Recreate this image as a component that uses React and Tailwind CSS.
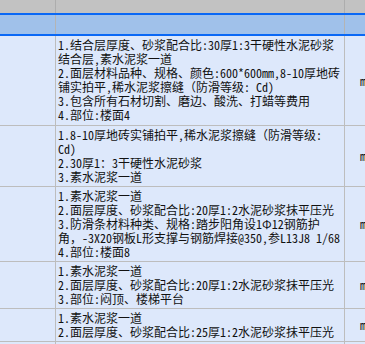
import React from "react";

const rows = [
  {
    h: "h-[89px]",
    lines: [
      "1.结合层厚度、砂浆配合比:30厚1:3干硬性水泥砂浆",
      "结合层,素水泥浆一道",
      "2.面层材料品种、规格、颜色:600*600mm,8-10厚地砖",
      "铺实拍平,稀水泥浆擦缝（防滑等级: Cd)",
      "3.包含所有石材切割、磨边、酸洗、打蜡等费用",
      "4.部位:楼面4",
    ],
  },
  {
    h: "h-[60px]",
    lines: [
      "1.8-10厚地砖实铺拍平,稀水泥浆擦缝（防滑等级:",
      "Cd)",
      "2.30厚1：3干硬性水泥砂浆",
      "3.素水泥浆一道",
    ],
  },
  {
    h: "h-[74px]",
    lines: [
      "1.素水泥浆一道",
      "2.面层厚度、砂浆配合比:20厚1:2水泥砂浆抹平压光",
      "3.防滑条材料种类、规格:踏步阳角设1Φ12钢筋护",
      "角，-3X20钢板L形支撑与钢筋焊接@350,参L13J8 1/68",
      "4.部位:楼面8",
    ],
  },
  {
    h: "h-[46px]",
    lines: [
      "1.素水泥浆一道",
      "2.面层厚度、砂浆配合比:20厚1:2水泥砂浆抹平压光",
      "3.部位:闷顶、楼梯平台",
    ],
  },
  {
    h: "h-[32px]",
    lines: [
      "1.素水泥浆一道",
      "2.面层厚度、砂浆配合比:25厚1:2水泥砂浆抹平压光",
    ],
  },
  {
    h: "h-[20px]",
    lines: [],
  },
];

export default function App() {
  return (
    <div
      className="w-[365px] h-[344px] overflow-hidden bg-[#dde8fb] text-[12px] leading-[14px] text-[#111]"
      style={{ fontFamily: '"Noto Sans Mono CJK SC", "Noto Sans CJK SC", monospace' }}
    >
      {/* gray header */}
      <div className="flex h-[13px] bg-[#c2c2c2]">
        <div className="w-[56px] border-r border-[#adadad]" />
        <div className="w-[289px] border-r border-[#adadad]" />
        <div className="flex-1" />
      </div>
      {/* selected row */}
      <div className="flex h-[23px] bg-[#a0c1ea] border-y-2 border-[#0a68f5]">
        <div className="w-[56px] border-r border-[#b4b4b4]" />
        <div className="w-[289px] border-r border-[#b4b4b4]" />
        <div className="flex-1" />
      </div>
      {rows.map((r, i) => (
        <div key={i} className={`flex ${r.h} border-b border-[#bdbdbd] box-content`}>
          <div className="w-[56px] shrink-0 border-r border-[#bdbdbd]" />
          <div className="w-[289px] shrink-0 border-r border-[#bdbdbd] pl-[2px] pt-[2px] whitespace-nowrap overflow-hidden">
            {r.lines.map((l, j) => (
              <div key={j}>{l}</div>
            ))}
          </div>
          <div className="flex-1 flex items-center pl-[15px] whitespace-nowrap overflow-hidden">
            {r.lines.length > 0 ? "m2" : ""}
          </div>
        </div>
      ))}
    </div>
  );
}
